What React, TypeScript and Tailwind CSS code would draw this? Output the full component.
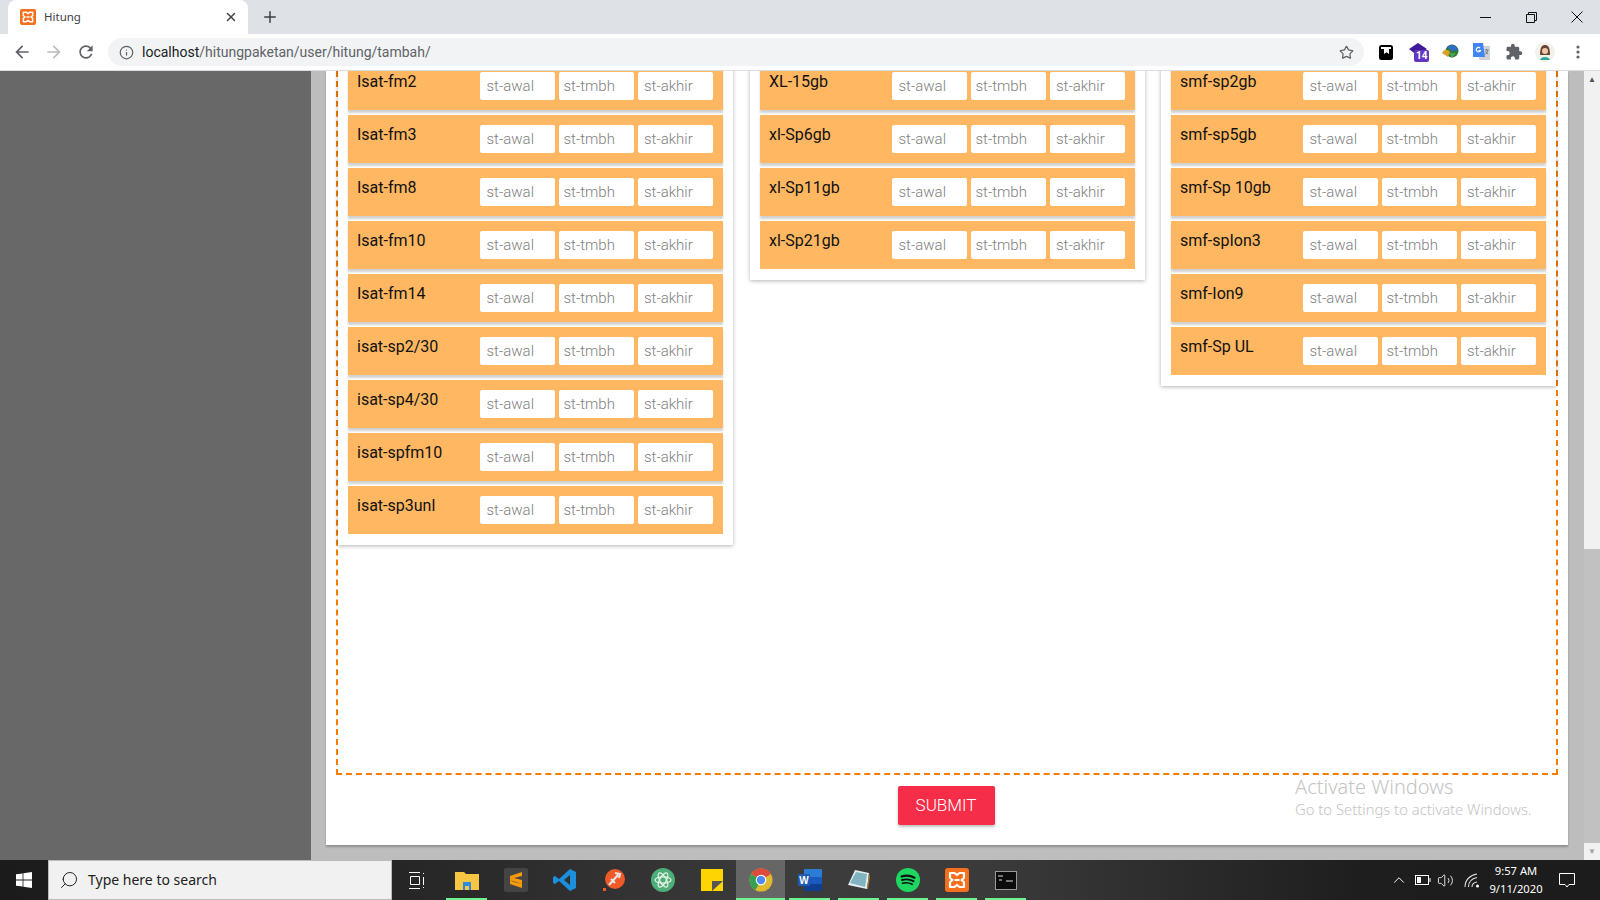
import { Info, Star, X, Plus, Search, ChevronUp, Volume2 } from 'lucide-react';

const columns = [
  ['Isat-fm2', 'Isat-fm3', 'Isat-fm8', 'Isat-fm10', 'Isat-fm14', 'isat-sp2/30', 'isat-sp4/30', 'isat-spfm10', 'isat-sp3unl'],
  ['XL-15gb', 'xl-Sp6gb', 'xl-Sp11gb', 'xl-Sp21gb'],
  ['smf-sp2gb', 'smf-sp5gb', 'smf-Sp 10gb', 'smf-spIon3', 'smf-Ion9', 'smf-Sp UL'],
];

function XamppIcon({ size }: { size: number }) {
  return (
    <svg width={size} height={size} viewBox="0 0 24 24">
      <rect width="24" height="24" rx="3" fill="#f4701f" />
      <path d="M5 5h4.5L12 7l2.5-2H19v5l-2.5 2 2.5 2v5h-4.5L12 17l-2.5 2H5v-5l2.500-2L5 10zM9.500 12h5" fill="none" stroke="#fff" strokeWidth="2.2" strokeLinejoin="round" />
    </svg>
  );
}

function Row({ label }: { label: string }) {
  return (
    <div className="flex h-12 bg-[#ffb761] py-2.5 pr-2.5 pl-[9px] shadow-[0_3px_2px_0_rgba(0,0,0,0.18)] last:shadow-none">
      <div className="w-[123px] text-base leading-5 text-[#111]">{label}</div>
      <div className="flex gap-1">
        <input readOnly placeholder="st-awal" className="h-7 w-[75px] rounded-[2px] bg-white pr-1 pl-[6.5px] text-[15px] font-light placeholder:text-[#808080]" />
        <input readOnly placeholder="st-tmbh" className="h-7 w-[75px] rounded-[2px] bg-white pr-1 pl-[4.5px] text-[15px] font-light placeholder:text-[#808080]" />
        <input readOnly placeholder="st-akhir" className="h-7 w-[75px] rounded-[2px] bg-white pr-1 pl-1.5 text-[15px] font-light placeholder:text-[#808080]" />
      </div>
    </div>
  );
}

function TabStrip() {
  return (
    <div className="flex h-[34px] items-end bg-[#dee1e6] pl-2 font-['Noto_Sans',sans-serif]">
      <div className="flex h-[34px] w-[240px] items-center rounded-t-lg bg-white pr-2.5 pl-3">
        <XamppIcon size={16} />
        <span className="ml-2 flex-1 text-[11.5px] text-[#3c4043]">Hitung</span>
        <X size={14} strokeWidth={2.5} className="text-[#44474b]" />
      </div>
      <div className="ml-[13px] flex h-[34px] items-center">
        <Plus size={18} strokeWidth={2} className="text-[#3c4043]" />
      </div>
      <div className="ml-auto flex h-[34px] items-center">
        <div className="flex w-[46px] justify-center">
          <svg width="11" height="1" viewBox="0 0 11 1"><rect width="11" height="1" fill="#111" /></svg>
        </div>
        <div className="flex w-[46px] justify-center">
          <svg width="11" height="11" viewBox="0 0 11 11" fill="none" stroke="#111"><path d="M.5 2.500h8v8h-8zM2.500 2.500v-2h8v8h-2" /></svg>
        </div>
        <div className="flex w-[46px] justify-center">
          <svg width="12" height="12" viewBox="0 0 12 12" stroke="#111"><path d="M.5.500l11 11M11.500.500l-11 11" /></svg>
        </div>
      </div>
    </div>
  );
}

function Toolbar() {
  return (
    <div className="flex h-[37px] items-center border-b border-[#dadce0] bg-white font-['Roboto',sans-serif]">
      <div className="flex w-[108px] items-center pl-[12px]">
        <svg width="20" height="20" viewBox="0 0 24 24" fill="#5f6368"><path d="M20 11H7.830l5.590-5.590L12 4l-8 8 8 8 1.410-1.410L7.830 13H20v-2z" /></svg>
        <svg className="ml-[12px] -scale-x-100" width="20" height="20" viewBox="0 0 24 24" fill="#babcbe"><path d="M20 11H7.830l5.590-5.590L12 4l-8 8 8 8 1.410-1.410L7.830 13H20v-2z" /></svg>
        <svg className="ml-[12px]" width="20" height="20" viewBox="0 0 24 24" fill="#5f6368"><path d="M17.650 6.350C16.200 4.900 14.210 4 12 4c-4.420 0-7.990 3.580-7.990 8s3.570 8 7.990 8c3.730 0 6.840-2.550 7.730-6h-2.080c-.82 2.330-3.040 4-5.650 4-3.310 0-6-2.690-6-6s2.690-6 6-6c1.660 0 3.140.69 4.220 1.780L13 11h7V4l-2.350 2.350z" /></svg>
      </div>
      <div className="flex h-7 w-[1256px] items-center rounded-full bg-[#f1f3f4] pr-2.5 pl-[11px]">
        <Info size={15} strokeWidth={2} className="text-[#5f6368]" />
        <span className="ml-[8px] flex-1 text-[14px] text-[#5f6368]"><span className="text-[#202124]">localhost</span>/hitungpaketan/user/hitung/tambah/</span>
        <Star size={15} strokeWidth={2} className="text-[#5f6368]" />
      </div>
      <div className="ml-[15px] flex w-[214px] items-center">
        <div className="flex w-[31px] justify-start">
          <svg width="14" height="15" viewBox="0 0 14 15"><rect width="14" height="15" rx="2.500" fill="#000" /><path d="M2 2h10v2H2zM5 4h5v5l-2.500-1.800L5 9z" fill="#fff" /></svg>
        </div>
        <div className="relative flex w-[32px] justify-start">
          <svg className="-ml-[2px]" width="20" height="18" viewBox="0 0 20 18"><path d="M10 0l9 6-9 7-9-7z" fill="#3f1a9b" /></svg>
          <span className="absolute top-[7px] left-[4px] rounded-[2px] bg-[#6236c0] px-[2px] text-[10px] leading-[12px] font-bold text-white">14</span>
        </div>
        <div className="flex w-[31px] justify-start">
          <svg width="17" height="16" viewBox="0 0 17 16"><circle cx="10" cy="7" r="6.500" fill="#2f7a3c" /><path d="M5 3a6.500 6.500 0 0 1 11 3l-6 1z" fill="#2d6fc4" /><path d="M0 9c2-4 6-4 8-1l-2 5z" fill="#d9a02a" /><path d="M7 9h7l-4 5z" fill="#49a648" /></svg>
        </div>
        <div className="flex w-[32px] justify-start">
          <svg width="17" height="18" viewBox="0 0 17 18"><rect x="6" y="3" width="11" height="14" fill="#cfd3d8" /><path d="M0 0h10l2 14H0z" fill="#4285f4" /><path d="M7 5a2.200 2.200 0 1 0 .5 2.500H5.500" fill="none" stroke="#fff" strokeWidth="1.200" /><path d="M12 7h3.500M13.500 6v1M15 7c-.5 2-1.500 3.500-3 4.500M12.500 8.500c.5 1 1.500 2 2.500 2.500" fill="none" stroke="#6b7078" strokeWidth=".9" /></svg>
        </div>
        <div className="flex w-[31px] justify-start">
          <svg width="18" height="18" viewBox="0 0 24 24" fill="#5f6368"><path d="M20.500 11H19V7c0-1.100-.9-2-2-2h-4V3.500C13 2.120 11.880 1 10.500 1S8 2.120 8 3.500V5H4c-1.100 0-1.990.9-1.990 2v3.800H3.500c1.490 0 2.700 1.210 2.700 2.700s-1.210 2.700-2.700 2.700H2V20c0 1.100.9 2 2 2h3.800v-1.500c0-1.490 1.210-2.700 2.700-2.700 1.490 0 2.700 1.210 2.700 2.700V22H17c1.100 0 2-.9 2-2v-4h1.500c1.380 0 2.500-1.120 2.500-2.500S21.880 11 20.500 11z" /></svg>
        </div>
        <div className="flex w-[40px] justify-start">
          <svg className="-ml-[1px]" width="20" height="20" viewBox="0 0 20 20"><circle cx="10" cy="10" r="10" fill="#f2f2ec" /><path d="M5 13c0-8 2-10 5-10s5 2 5 10z" fill="#6b4436" /><circle cx="10" cy="9" r="3" fill="#f0c8a8" /><path d="M5 18c1-4 9-4 10 0z" fill="#2aa8a0" /></svg>
        </div>
        <svg width="4" height="14" viewBox="0 0 4 14" fill="#5f6368"><circle cx="2" cy="2" r="1.600" /><circle cx="2" cy="7" r="1.600" /><circle cx="2" cy="12" r="1.600" /></svg>
      </div>
    </div>
  );
}

function Page() {
  return (
    <div className="flex h-[789px] overflow-hidden bg-[#bdbdbd] font-['Roboto',sans-serif]">
      <div className="w-[311px] shrink-0 bg-[#686868]" />
      <div className="ml-[15px] h-[774px] w-[1242px] shrink-0 bg-white shadow-[0_2px_2px_rgba(0,0,0,0.25)]">
        <div className="mx-[10px] -mt-[20px] h-[724px] border-2 border-dashed border-[#f57c00]">
          <div className="-mt-[1px] grid grid-cols-[412px_411px_395px] items-start">
            {columns.map((rows, i) => (
              <div key={i} className="flex w-[395px] flex-col gap-[5px] bg-white p-2.5 pb-[11px] shadow-[0_1px_4px_rgba(0,0,0,0.3)]">
                {rows.map((label) => <Row key={label} label={label} />)}
              </div>
            ))}
          </div>
        </div>
        <div className="relative mt-[11px] flex justify-center">
          <button className="-ml-[2px] h-[39px] w-[97px] rounded-[2px] bg-[#f62d48] text-[17px] font-light text-white shadow-[0_2px_3px_rgba(0,0,0,0.25)]">SUBMIT</button>
          <div className="absolute top-[-11px] left-[969px] font-['Noto_Sans',sans-serif] font-light text-[#c4c4c4]">
            <div className="text-[20px] leading-6">Activate Windows</div>
            <div className="text-[14.8px] leading-5">Go to Settings to activate Windows.</div>
          </div>
        </div>
      </div>
      <div className="ml-auto flex w-4 flex-col bg-[#f1f1f1]">
        <div className="flex h-[17px] justify-center text-[8px] leading-[17px] text-[#505050]">▲</div>
        <div className="mt-[461px] h-[294px] w-full bg-[#c1c1c1]" />
        <div className="flex h-[17px] justify-center text-[8px] leading-[17px] text-[#a0a0a0]">▼</div>
      </div>
    </div>
  );
}

function TaskIcon({ active, running, children }: { active?: boolean; running?: boolean; children: React.ReactNode }) {
  return (
    <div className={`relative flex h-10 w-[49px] items-center justify-center ${active ? 'bg-[#666]' : ''}`}>
      {children}
      {running && <div className={`absolute bottom-0 h-[2px] bg-[#6cf58d] ${active ? 'inset-x-0' : 'inset-x-1'}`} />}
    </div>
  );
}

function Taskbar() {
  return (
    <div className="flex h-10 items-stretch bg-[linear-gradient(90deg,#1b1b1b_0%,#262626_25%,#3c3c3c_50%,#3a3a3a_62%,#1e1e1e_85%,#1c1c1c_100%)] font-['Noto_Sans',sans-serif]">
      <div className="flex w-[48px] items-center justify-center">
        <svg width="16" height="16" viewBox="0 0 16 16" fill="#fff"><path d="M0 2.300l6.600-.9v6.200H0zM7.400 1.300L16 0v7.600H7.400zM0 8.400h6.600v6.200L0 13.700zM7.400 8.400H16V16l-8.600-1.200z" /></svg>
      </div>
      <div className="flex w-[344px] items-center border border-[#bbb] bg-[#f1f1f1] pl-[10px]">
        <Search size={20} strokeWidth={1.2} className="-scale-x-100 text-[#222]" />
        <span className="ml-[9px] text-sm text-[#222]">Type here to search</span>
      </div>
      <div className="flex w-[50px] items-center justify-center pr-[2px]">
        <svg width="17" height="17" viewBox="0 0 17 17" fill="none" stroke="#fff"><path d="M1 .5h11M1 16.500h11M2.500 4.500h9v8h-9zM15.500 1v1M15.500 5v8M15.500 15v1" /></svg>
      </div>
      <TaskIcon running>
        <svg width="24" height="20" viewBox="0 0 24 20"><path d="M0 2h9l2 2h13v16H0z" fill="#f6c544" /><path d="M8 12h8v8h-2v-4h-4v4H8z" fill="#2c8ad8" /></svg>
      </TaskIcon>
      <TaskIcon>
        <div className="flex h-6 w-6 items-center justify-center rounded-[2px] bg-[#444]">
          <svg width="14" height="18" viewBox="0 0 14 18" fill="#f79a0c"><path d="M13 1L1 5v4l12 4V9L5 7l8-2zM1 13l12 4v-4L5 11l-4-2z" /></svg>
        </div>
      </TaskIcon>
      <TaskIcon>
        <svg width="24" height="24" viewBox="0 0 24 24"><path d="M17 1l6 3v16l-6 3L6 13l-4 3-2-1V9l2-1 4 3zM17 7l-6 5 6 5z" fill="#1b8fdc" /></svg>
      </TaskIcon>
      <TaskIcon>
        <svg width="24" height="24" viewBox="0 0 24 24"><circle cx="13" cy="11" r="10" fill="#ee5a28" /><path d="M7 17l9-10M13 5l5 1-1 4M9 11l4 4" stroke="#e8e8e8" strokeWidth="2" fill="none" /><rect x="1" y="20" width="3" height="3" fill="#ee5a28" /></svg>
      </TaskIcon>
      <TaskIcon>
        <svg width="24" height="24" viewBox="0 0 24 24"><circle cx="12" cy="12" r="12" fill="#4fae78" /><g fill="none" stroke="#e6f4ea" strokeWidth="1.200"><ellipse cx="12" cy="12" rx="8" ry="3.200" /><ellipse cx="12" cy="12" rx="8" ry="3.200" transform="rotate(60 12 12)" /><ellipse cx="12" cy="12" rx="8" ry="3.200" transform="rotate(120 12 12)" /></g></svg>
      </TaskIcon>
      <TaskIcon>
        <svg width="22" height="22" viewBox="0 0 22 22"><path d="M0 0h22v22H0z" fill="#ffd500" /><path d="M11 22V12h11z" fill="#555" /></svg>
      </TaskIcon>
      <TaskIcon active running>
        <svg width="24" height="24" viewBox="0 0 24 24"><circle cx="12" cy="12" r="11.500" fill="#e2b92e" /><path d="M12 12L2.100 6A11.500 11.500 0 0 1 22 6z" fill="#dd4b3e" /><path d="M12 12l-5.600 10A11.500 11.500 0 0 1 2.100 6z" fill="#35a04f" /><circle cx="12" cy="12" r="5.300" fill="#fff" /><circle cx="12" cy="12" r="4.200" fill="#4c8bf5" /></svg>
      </TaskIcon>
      <TaskIcon running>
        <svg width="24" height="22" viewBox="0 0 24 22"><rect x="6" y="0" width="18" height="22" rx="1" fill="#2b7cd3" /><rect x="6" y="15" width="18" height="7" fill="#103f91" /><rect x="6" y="8" width="18" height="7" fill="#185abd" /><rect x="0" y="5" width="12" height="12" rx="1" fill="#1e59b5" /><text x="6" y="14.500" textAnchor="middle" fontSize="10" fontWeight="700" fill="#fff" fontFamily="Liberation Sans, sans-serif">W</text></svg>
      </TaskIcon>
      <TaskIcon running>
        <svg width="24" height="24" viewBox="0 0 24 24"><path d="M8 2l14 3-2 16-19-4z" fill="#e4eef0" /><path d="M3 15L9 4l11 2-2 13z" fill="#7fb4c0" /><path d="M22 5l1 4-2 12-1 0z" fill="#a87c3a" /></svg>
      </TaskIcon>
      <TaskIcon running>
        <svg width="24" height="24" viewBox="0 0 24 24"><circle cx="12" cy="12" r="12" fill="#1ed760" /><g fill="none" stroke="#111" strokeLinecap="round"><path d="M5.500 8.500c4-1.200 9-1 13 1.200" strokeWidth="2.200" /><path d="M6 12c3.500-1 8-.7 11.500 1.200" strokeWidth="1.900" /><path d="M6.500 15.300c3-.8 6.700-.6 9.700 1" strokeWidth="1.600" /></g></svg>
      </TaskIcon>
      <TaskIcon running>
        <XamppIcon size={24} />
      </TaskIcon>
      <TaskIcon running>
        <svg width="22" height="19" viewBox="0 0 22 19"><rect x=".5" y=".5" width="21" height="18" fill="#0c0c0c" stroke="#9a9a9a" /><path d="M3 5h5M4 9h3M11 10h7" stroke="#ddd" /></svg>
      </TaskIcon>
      <div className="mr-[13px] ml-auto flex items-center text-white">
        <ChevronUp size={18} strokeWidth={1.3} />
        <svg className="ml-[7px]" width="16" height="10" viewBox="0 0 16 10" fill="none" stroke="#fff"><rect x=".5" y=".5" width="13" height="9" /><rect x="2" y="2" width="4" height="6" fill="#fff" stroke="none" /><path d="M15 3v4" /></svg>
        <Volume2 size={17} strokeWidth={1.2} className="ml-[6px]" />
        <svg className="ml-[10px]" width="16" height="15" viewBox="0 0 16 15" fill="none" stroke="#ddd" strokeWidth="1.100"><path d="M1 14C1 7 6 2 13 1M4.500 14c0-5 3.500-8.500 8.500-9.500M8 14c0-2.500 2-4.500 5-5" /><circle cx="13.500" cy="13" r="1.500" fill="#fff" stroke="none" /></svg>
        <div className="ml-[5px] w-[62px] text-center text-[11.2px] leading-[18px]">
          <div>9:57 AM</div>
          <div>9/11/2020</div>
        </div>
        <div className="flex w-[40px] justify-center">
          <svg width="16" height="15" viewBox="0 0 16 15" fill="none" stroke="#fff"><path d="M.5.500h15v11H10l-2 2.500L6 11.500H.5z" /></svg>
        </div>
      </div>
    </div>
  );
}

export default function App() {
  return (
    <div className="flex h-[900px] flex-col overflow-hidden">
      <TabStrip />
      <Toolbar />
      <Page />
      <Taskbar />
    </div>
  );
}
